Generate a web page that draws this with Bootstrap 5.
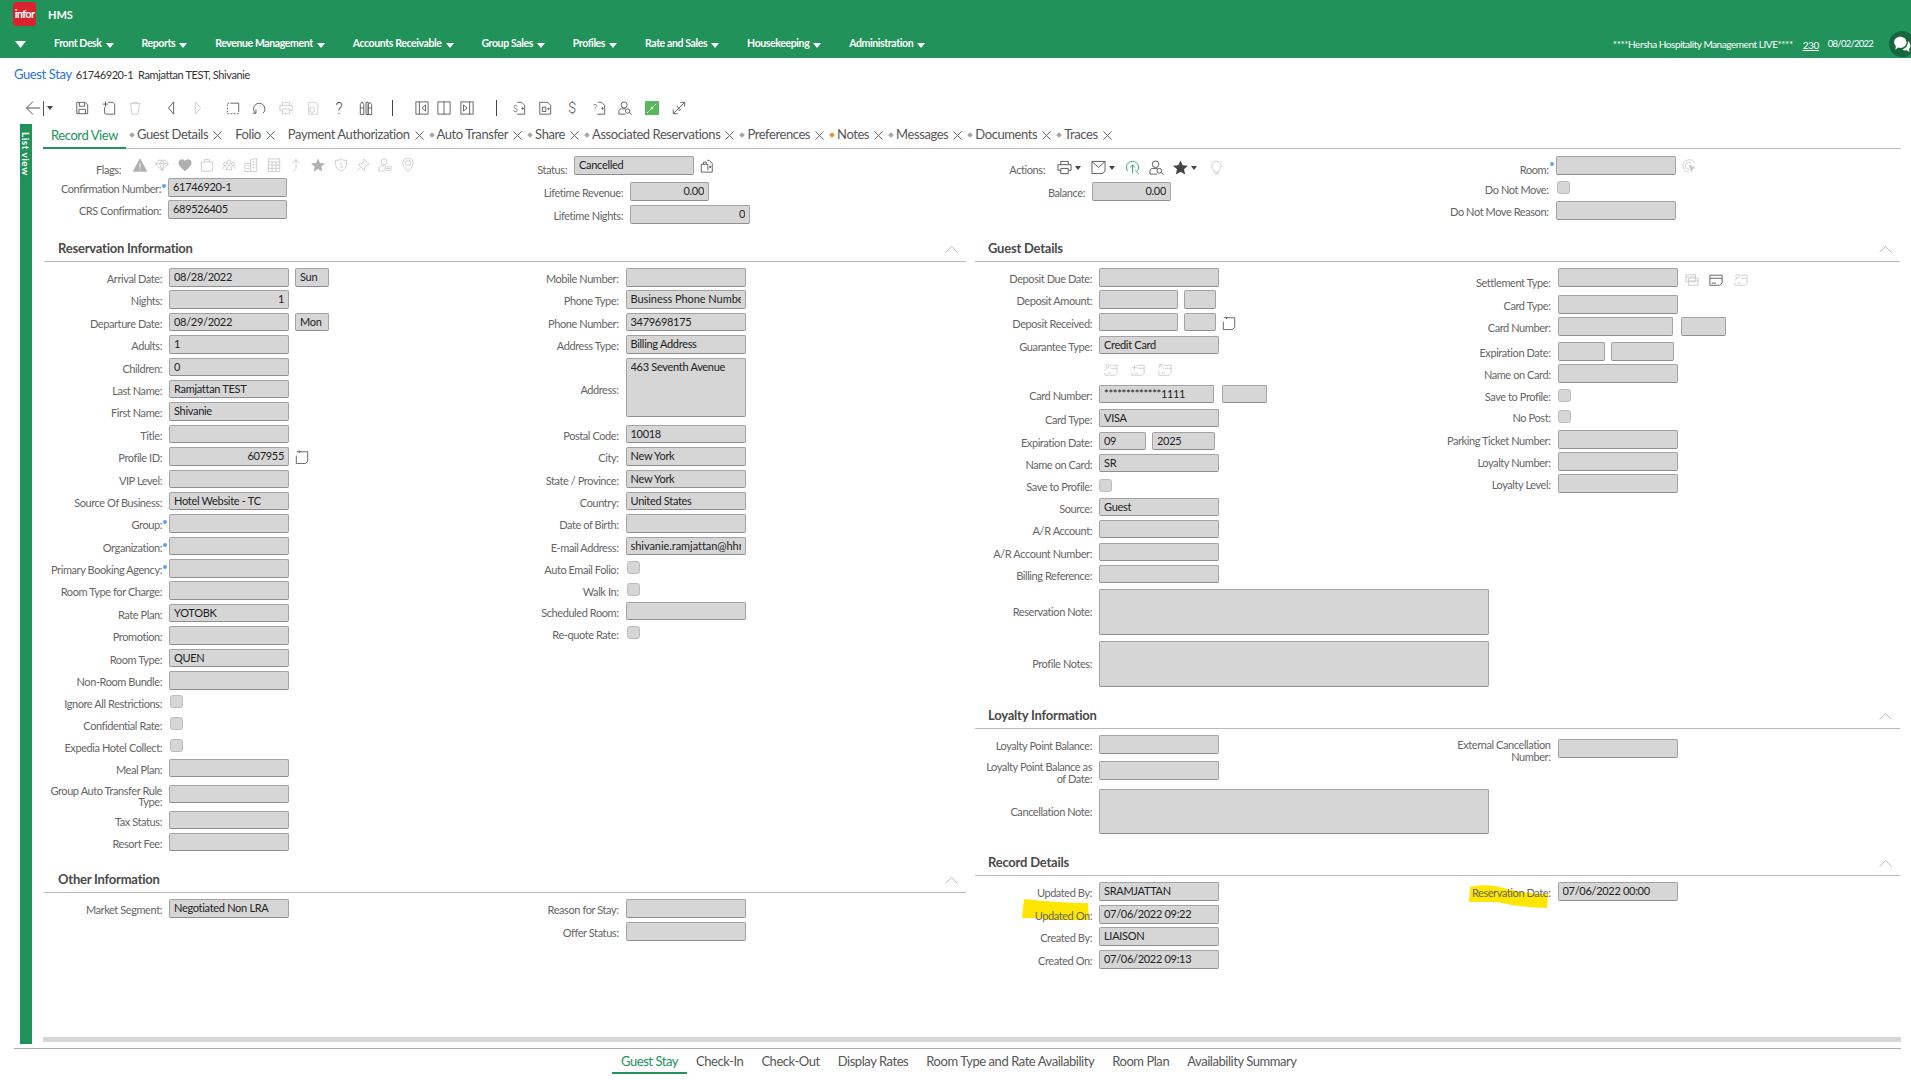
<!doctype html>
<html lang="en">
<head>
<meta charset="utf-8">
<title>HMS - Guest Stay</title>
<link href="https://cdn.jsdelivr.net/npm/bootstrap@5.3.0/dist/css/bootstrap.min.css" rel="stylesheet">
<style>
html,body{height:1080px;overflow:hidden;background:#fff}
body{font-family:"Lato","Liberation Sans",sans-serif;font-size:11px;color:#444;letter-spacing:-.35px}
svg.ic{fill:none;stroke:currentColor;stroke-width:1;flex:none;display:block;overflow:visible}
symbol text{fill:currentColor;stroke:none;font-family:"Roboto",sans-serif;font-weight:300}
.c-d{color:#555}.c-l{color:#c9c9c9}.c-g{color:#b0b0b0}
/* header */
.appbar{background:#20925a;height:58px;color:#fff;overflow:hidden;display:block}
.top-row{height:33px;padding-left:13px}
.logo-box{width:23px;height:24px;background:#d9232e;border-radius:3px;color:#fff;font-weight:700;font-size:11px;letter-spacing:-.7px;margin-top:-6px;display:flex;align-items:center;justify-content:center;line-height:1}
.hms{font-size:11px;font-weight:700;margin-left:12px;margin-top:-2px;letter-spacing:0}
.menu-row{height:25px;padding-left:15px;padding-bottom:3px}
.menu-tri{width:11px;height:7px;margin-right:28px}
.menu-i{font-size:10.5px;font-weight:700;color:#fff;margin-right:27.9px;white-space:nowrap;display:flex;align-items:center;gap:4px;letter-spacing:-.38px;padding:0}
.menu-i:hover{color:#fff}
.caret-w{width:0;height:0;border-left:4px solid transparent;border-right:4px solid transparent;border-top:5px solid #fff;margin-top:2px}
.sys{font-size:10px;color:#fff;margin-left:auto;white-space:nowrap;letter-spacing:-.44px;display:flex;align-items:center}
.sys-num{text-decoration:underline;margin:3px 9px 0 10px}
.sys-date{letter-spacing:-.75px;font-size:9.5px}
.chat{width:26px;height:26px;border-radius:50%;background:#17663f;margin-left:16px;margin-right:-4px;display:flex;align-items:center;justify-content:center}
/* crumb + toolbar */
.crumb{height:34px;padding-left:14px;color:#333;letter-spacing:-.4px}
.crumb a{color:#2a6fdb;font-size:13px;text-decoration:none;margin-right:4px;letter-spacing:-.38px}
.tbar{height:32px;padding-left:26px}
.ti{width:14px;height:16px}
.tg{display:flex;gap:12.6px}
.t-m22{margin-left:22px}.t-m21{margin-left:21px}.t-m19{margin-left:19px}.t-m15{margin-left:15px}
.tg-n{gap:8.5px}
.tg-w{gap:12.67px}
.sep{width:1px;height:16px;background:#444}
.bar-v{width:1px;height:15px;background:#555;margin-left:3px}
.caret-d{width:0;height:0;border-left:3px solid transparent;border-right:3px solid transparent;border-top:4px solid #444;margin-left:3px}
/* main */
.mainw{height:920px;padding-left:20px}
.listv{width:12px;height:920px;background:#20925a;color:#fff;flex:none;font-size:10px;font-weight:700;writing-mode:vertical-rl;padding-top:8px;line-height:12px;letter-spacing:.5px;white-space:nowrap}
.cont{width:1858px;margin-left:11px;height:920px}
.tabsw{height:25px;border-bottom:1px solid #b9b9b9;font-size:13px;flex-wrap:nowrap;letter-spacing:-.42px}
.tabsw .nav-link{padding:0 0 2px;color:#565656;display:flex;align-items:center;height:24px;white-space:nowrap;margin-right:6px}
.tabsw .nav-link.on{color:#20925a;border-bottom:2px solid #20925a;padding:0 8px;height:25px;margin-right:4px}
.tdot{width:4px;height:4px;background:#a6a6a6;transform:rotate(45deg);margin-right:3px;flex:none}
.tdot.ora{background:#f08a24}
.t-x{width:9px;height:9px;margin-left:5px;color:#666}
.ms-f{margin-left:7px}
/* summary */
.sumw{height:88px;padding-top:7px}
.s-a{width:436px}.s-b{width:508px}.s-c{width:437.5px}
.frow{display:flex;align-items:flex-start;height:22.4px}
.flab{flex:none;text-align:right;color:#666;padding-top:4px;line-height:14px;margin-right:7px;position:relative;font-size:11px;letter-spacing:-.42px}
.flab.two{padding-top:0;line-height:11.5px}
.flab.mid{padding-top:16px}
.lw-a{width:118px}.lw-b{width:139px}.lw-c{width:117px}.lw-d{width:150.5px}
.fbox{width:120px;height:18.5px;padding:0 4px;font-size:11px;line-height:15px;background:#d6d6d6;border:1px solid #a3a3a3;border-bottom-color:#8f8f8f;border-radius:2px;color:#222;white-space:nowrap;overflow:clip;overflow-clip-margin:content-box;flex:none;min-height:0;letter-spacing:-.3px}
.ls0{letter-spacing:-.05px}
.req::after{content:"";position:absolute;right:-5px;top:6px;width:4px;height:4px;border-radius:50%;background:#5aa5f0}
.w78{width:79px}.w32{width:32px;margin-left:6px}.w115{width:115px}.w45{width:45px;margin-left:8px}.w47{width:47px}.w63{width:63px;margin-left:6px}
.w33a{width:34px;margin-left:6px}
.w119{width:119px}.w79{width:79px}
.wide{width:390px}
.h46{height:46px}.h60{height:59px}.hc{height:45px}
.fchk{width:13px;height:13px;background-color:#d6d6d6;border:1px solid #bdbdbd;border-radius:2px;margin:2px 0 0 1px;opacity:1!important;flex:none;float:none}
.f3{margin-top:3px;margin-left:0}
.fi{width:14px;height:14px;color:#555;margin:3px 0 0 6px}
.fi.c-l{color:#c9c9c9}
/* section */
.panes{width:1858px}
.pane-l{width:923px;margin-right:9px;padding-left:1px}
.pane-r{width:925px}
.shead{height:25px;border-bottom:1px solid #b9b9b9;font-size:13px;font-weight:700;color:#4a4a4a;padding:0 8px 0 14px;display:flex;justify-content:space-between;align-items:center;letter-spacing:-.22px;margin:0}
.pane-r .shead{padding-left:13px}
.chev{width:13px;height:7px;color:#bbb}
.sbody{padding-top:6px}
.c1{width:436px}.c2{width:487px}.c3{width:425px}.c4{width:500px}
.r-19{height:27px}.r-21{height:21.8px}.r-21b{height:21px}.r-20{height:20.5px}.r-22{height:22px}.r-225{height:22.5px}.r-23{height:23px}.r-24{height:24px}.r-25{height:25px}.r-26{height:26px}.r-28{height:28px}.r-46{height:52px}.r-66{height:67.2px}
.sec-a{height:631px}.sec-g{height:467px}.sec-l{height:147px}
.iconrow{padding-left:129px;gap:12.8px;padding-top:4px;height:26.6px}
.addr .flab{padding-top:25px}
.hl{position:absolute;fill:#ffe600;stroke:none}
.hl-a{left:47px;top:-6px;width:67px;height:21px}
.hl-b{left:69px;top:3px;width:79px;height:23px}
.textup{position:relative}
.scrollb{height:5px;background:#d6d6d6;margin-top:auto;margin-bottom:2px}
/* bottom */
.btabs{margin-left:14px;width:1887px;border-top:1px solid #adadad;height:26px;padding-left:598px;font-size:13px;margin-top:4px;letter-spacing:-.45px}
.btabs .nav-link{padding:0 9px;color:#565656;height:25px;line-height:25px;white-space:nowrap}
.btabs .nav-link.on{color:#20925a;border-bottom:2px solid #20925a}
/* summary row details */
.flags-l{width:78px;padding-top:7px}
.flagset{gap:8.3px;margin-left:5px;margin-top:2px}
.flg{width:14px;height:14px}
.lw-st{width:88px}.st{height:26px}.st2{height:23px}
.st .flab,.st2 .flab{padding-top:7px}
.lr{height:23px}
.lw-lt{width:144px}
.lw-ac{width:58px}.lw-bal{width:98px}
.lw-rm{width:124px}
.ti2{width:15px;height:15px}
.acts{margin-top:4px;margin-left:5px}
.me-act{margin-right:10px}.me-act2{margin-right:10px}
.ms-a1{margin-left:9px}.ms-a2{margin-left:9px}.ms-a3{margin-left:12px}
.c-grn{color:#3aa76d}.c-st{color:#444}
.r-21e{height:22px}
.pt-set{padding-top:8px}
.set-ic{gap:10.5px;margin:4px 0 0 7px}
.ext{padding-top:4px}
.ext .flab{padding-left:45px}
</style>
</head>
<body>
<svg class="d-none">
<symbol id="i-save" viewBox="0 0 16 16"><path d="M2 1.5h9.5l3 3v10h-12.5z"/><path d="M5 1.5v4.5h6v-4.500M4.500 14.500v-5h7.500v5"/></symbol>
<symbol id="i-new" viewBox="0 0 16 16"><path d="M7 1.500h5.500l2 2v11.500h-10.500l-1-1v-7"/><path d="M4 .5v6M1 3.500h6"/></symbol>
<symbol id="i-trash" viewBox="0 0 16 16"><path d="M1.500 3h13M5.500 3v-1.500h5v1.500M3 3l1.500 12h7l1.500-12"/></symbol>
<symbol id="i-prev" viewBox="0 0 16 16"><path d="M11 1L5 8l6 7z"/></symbol>
<symbol id="i-next" viewBox="0 0 16 16"><path d="M5 1l6 7-6 7z"/></symbol>
<symbol id="i-copy" viewBox="0 0 16 16"><path d="M5 2.500h9.500v10"/><path d="M14.500 14.500h-13v-12h3.500" stroke-dasharray="2 1.600"/></symbol>
<symbol id="i-undo" viewBox="0 0 16 16"><path d="M4 14a6.500 6.500 0 1 1 8.500 0"/><path d="M4.500 9.500v4.500h-3.500"/></symbol>
<symbol id="i-print" viewBox="0 0 16 16"><path d="M4 5v-3.500h8v3.500M4 11h-3v-6h14v6h-3M4 9h8v5.500h-8z"/></symbol>
<symbol id="i-docc" viewBox="0 0 16 16"><path d="M3 1.500h8l2.500 2.500v11h-10.500z"/><circle cx="7" cy="10" r="3"/></symbol>
<symbol id="i-help" viewBox="0 0 16 16"><text x="8" y="15" font-size="18" text-anchor="middle">?</text></symbol>
<symbol id="i-cols" viewBox="0 0 16 16"><path d="M1.500 4l2-3 2 3v11.500h-4zM8 1.500h2.500v14h-2.500zM10.500 4l2-2.500 2 2.500v11.500h-4zM1.500 8h4M10.500 8h4"/></symbol>
<symbol id="i-pl" viewBox="0 0 16 16"><path d="M1 1h14v14h-14zM5 1v14M12 4.500l-4 3.500 4 3.500z"/></symbol>
<symbol id="i-pc" viewBox="0 0 16 16"><path d="M1 1h14v14h-14zM8 1v14"/></symbol>
<symbol id="i-pr" viewBox="0 0 16 16"><path d="M1 1h14v14h-14zM11 1v14M4 4.500l4 3.500-4 3.500z"/></symbol>
<symbol id="i-dola" viewBox="0 0 16 16"><path d="M6 1.500h5l3.500 3.500v10h-8.500"/><circle cx="12.200" cy="8.500" r=".8" fill="currentColor"/><text x="1" y="12" font-size="10">$</text></symbol>
<symbol id="i-docb" viewBox="0 0 16 16"><path d="M2 1.500h9l3.500 3.500v10h-12.500z"/><path d="M5 7h4v5h-4z"/><circle cx="12" cy="9" r=".8" fill="currentColor"/></symbol>
<symbol id="i-dollar" viewBox="0 0 16 16"><text x="8" y="14" font-size="17" text-anchor="middle">$</text></symbol>
<symbol id="i-helpd" viewBox="0 0 16 16"><path d="M7 1.500h4l3.500 3.500v10h-8.500"/><circle cx="12" cy="8.500" r=".8" fill="currentColor"/><text x="1" y="11" font-size="10">?</text></symbol>
<symbol id="i-pers" viewBox="0 0 16 16"><circle cx="7" cy="4.500" r="3.500"/><path d="M1 15v-3c0-2 1.500-3 3-3h5"/><path d="M1 15h7.500"/><circle cx="11" cy="11.500" r="2.500"/><path d="M13 13.500l2.500 2"/></symbol>
<symbol id="i-expand" viewBox="0 0 16 16"><path d="M1.500 14.500L14.500 1.500M9.500 1.500h5v5M1.500 9.500v5h5M5 5.500l5 5M9 11.500l-1.500-1.500"/></symbol>
<symbol id="i-tri" viewBox="0 0 16 16"><path d="M8 1L15.500 15H.5z" fill="currentColor"/><path d="M8 6v5M8 12.200v1.300" stroke="#fff"/></symbol>
<symbol id="i-dia" viewBox="0 0 16 16"><path d="M4 2.500h8l3.500 4-7.500 8-7.500-8zM.5 6.500h15M5.500 6.500l2.500 8 2.500-8-2.500-4z"/></symbol>
<symbol id="i-heart" viewBox="0 0 16 16"><path d="M8 15C3 11 .5 8.500.5 5.500 .5 3 2.500 1.500 4.500 1.500 6 1.500 7.300 2.300 8 3.500 8.700 2.300 10 1.500 11.500 1.500 13.500 1.500 15.500 3 15.500 5.500 15.500 8.500 13 11 8 15z" fill="currentColor" stroke="none"/></symbol>
<symbol id="i-bag" viewBox="0 0 16 16"><path d="M1.500 4.500h13v10.500h-13zM5.500 4.500v-3h5v3"/></symbol>
<symbol id="i-group" viewBox="0 0 16 16"><circle cx="8" cy="4.500" r="2.300"/><circle cx="3.500" cy="7" r="1.800"/><circle cx="12.500" cy="7" r="1.800"/><path d="M5 13.500c0-3 1-5 3-5s3 2 3 5zM1 12.500c0-1.500.8-3 2.500-3M15 12.500c0-1.500-.8-3-2.500-3"/></symbol>
<symbol id="i-book" viewBox="0 0 16 16"><path d="M1 6h6.500v9.500h-6.500zM7.500 15.500V2l7-1.500v15zM3 9h3M3 12h3M9.500 4.500h3M9.500 7.500h3M9.500 10.500h3"/></symbol>
<symbol id="i-table" viewBox="0 0 16 16"><path d="M1.500 1h13v14.500h-13zM1.500 4.500h13M1.500 8h13M1.500 11.800h13M5.800 4.500v11M10.200 4.500v11"/></symbol>
<symbol id="i-up" viewBox="0 0 16 16"><path d="M8 1.500v10c0 2-1 3-3 3.500M4.500 6l3.500-4.500 3.500 4.500"/></symbol>
<symbol id="i-star" viewBox="0 0 16 16"><path d="M8 .5l2.300 5.200 5.700.5-4.300 3.700 1.300 5.600-5-3-5 3 1.300-5.600L0 6.200l5.700-.5z" fill="currentColor" stroke="none"/></symbol>
<symbol id="i-shield" viewBox="0 0 16 16"><path d="M8 .8c2 1.500 4 2 6.500 2 0 6-1 9.500-6.500 12.500-5.500-3-6.500-6.500-6.500-12.500 2.500 0 4.500-.5 6.500-2z"/><text x="8" y="11" font-size="8" text-anchor="middle">$</text></symbol>
<symbol id="i-pin" viewBox="0 0 16 16"><path d="M9 1l6 6-2 .5-3 3.500-.5 3-7-6.500 3-.5 3.500-3zM5 10.500l-3.500 4"/></symbol>
<symbol id="i-perc" viewBox="0 0 16 16"><circle cx="7" cy="4.300" r="3.300"/><path d="M1 15v-2.500c0-2 1.500-3.500 3.500-3.500h4M1 15h7"/><path d="M9.500 10h5a1.500 1.500 0 0 1 0 4h-5a1.500 1.500 0 0 1 0-4zM9 12h6"/></symbol>
<symbol id="i-loc" viewBox="0 0 16 16"><path d="M8 15.500C4.500 11 2 8.500 2 6a6 6 0 0 1 12 0c0 2.500-2.500 5-6 9.500z"/><circle cx="8" cy="6" r="3"/></symbol>
<symbol id="i-newd" viewBox="0 0 16 16"><path d="M5 2h9.500v11l-2.500 2.500h-10.500v-9"/><path d="M2 2h4M4.500.5l1.500 1.500-1.500 1.500"/></symbol>
<symbol id="i-brief" viewBox="0 0 16 16"><path d="M8 1.500h2.500l3.500 3.500v10h-12.500v-9h7.500v7"/><path d="M4 6v-2.500h3v2.500"/><circle cx="11.700" cy="9" r=".8" fill="currentColor"/></symbol>
<symbol id="i-mail" viewBox="0 0 16 16"><path d="M1 1.500h14v10.500l-3 2.500h-11zM1 1.500l7 6.500 7-6.500"/></symbol>
<symbol id="i-search" viewBox="0 0 16 16"><path d="M3 12a6.500 6.500 0 1 1 10 0M8 14.500v-9M5.500 8l2.500-3 2.500 3M11 11l3.500 4"/></symbol>
<symbol id="i-bulb" viewBox="0 0 16 16"><path d="M5.500 11C4 10 3 8.500 3 6.500a5 5 0 0 1 10 0c0 2-1 3.500-2.500 4.500v2h-5zM6 15h4M2 1l1 1M14 1l-1 1"/></symbol>
<symbol id="i-target" viewBox="0 0 16 16"><path d="M14.500 5A7 7 0 1 0 8 15M11 5.500A4 4 0 1 0 8 12"/><path d="M8 7l7 3-3 1-1 3.500z" fill="currentColor"/></symbol>
<symbol id="i-cards" viewBox="0 0 16 16"><path d="M1 2h11v8h-11zM4 6h11v8h-11zM1 4.500h11M4 9h11"/></symbol>
<symbol id="i-card" viewBox="0 0 16 16"><path d="M1 2.500h14v9l-3 2.500h-11zM1 6h14M3 11.500h5"/></symbol>
<symbol id="i-cardu" viewBox="0 0 16 16"><circle cx="4" cy="3.500" r="2"/><path d="M1 9c0-1.500 1-2.500 3-2.500M7 2.500h8v9l-2.500 2.500h-11.500v-3M8 6h7M4 11.500h4"/></symbol>
<symbol id="i-cardp" viewBox="0 0 16 16"><path d="M1 5h6M4 2v6M6 2.500h9v9l-2.500 2.500h-11.500v-3M8 6h7M4 11.500h4"/></symbol>
<symbol id="i-carde" viewBox="0 0 16 16"><path d="M1.500 1.500l5 5M1.500 1.500v4M1.500 1.500h4M6 2.500h9v9l-2.500 2.500h-11.500v-6M8 6h7M4 11.500h4"/></symbol>
<symbol id="i-chat" viewBox="0 0 16 16"><path d="M1 6.500C1 3.500 3.500 1.500 6.500 1.500s5.500 2 5.500 5-2.500 5-5.500 5c-.7 0-1.300-.1-1.900-.3L2 13l.6-3C1.600 9 1 7.800 1 6.500z" fill="#fff" stroke="none"/><path d="M13.200 5.500c1.300.9 2.300 2.300 2.300 4 0 1.200-.5 2.200-1.300 3l.5 2.500-2.600-1.400c-1.300.3-2.900 0-3.900-.8 2.700-.4 5-3 5-6.300z" fill="#fff" stroke="none"/></symbol>
</svg>

<nav class="navbar appbar p-0">
  <div class="d-flex align-items-center top-row">
    <span class="logo-box">infor</span>
    <span class="hms">HMS</span>
  </div>
  <div class="d-flex align-items-center menu-row">
    <svg class="menu-tri" viewBox="0 0 11 7"><path d="M0 0h11L5.500 7z" fill="#fff"/></svg>
    <a class="menu-i nav-link" href="#">Front Desk<i class="caret-w"></i></a>
    <a class="menu-i nav-link" href="#">Reports<i class="caret-w"></i></a>
    <a class="menu-i nav-link" href="#">Revenue Management<i class="caret-w"></i></a>
    <a class="menu-i nav-link" href="#">Accounts Receivable<i class="caret-w"></i></a>
    <a class="menu-i nav-link" href="#">Group Sales<i class="caret-w"></i></a>
    <a class="menu-i nav-link" href="#">Profiles<i class="caret-w"></i></a>
    <a class="menu-i nav-link" href="#">Rate and Sales<i class="caret-w"></i></a>
    <a class="menu-i nav-link" href="#">Housekeeping<i class="caret-w"></i></a>
    <a class="menu-i nav-link" href="#">Administration<i class="caret-w"></i></a>
    <div class="sys">
      <span>****Hersha Hospitality Management LIVE****</span>
      <span class="sys-num">230</span>
      <span class="sys-date">08/02/2022</span>
      <span class="chat"><svg class="ic" width="18" height="18"><use href="#i-chat"/></svg></span>
    </div>
  </div>
</nav>

<div class="crumb d-flex align-items-center"><a href="#">Guest Stay</a><span>61746920-1 &nbsp;Ramjattan TEST, Shivanie</span></div>

<div class="tbar d-flex align-items-center c-d">
  <svg class="ic" width="14" height="14" viewBox="0 0 14 14"><path d="M14 7H.5M7 .5L.5 7 7 13.500"/></svg>
  <span class="bar-v"></span><span class="caret-d"></span>
  <div class="tg t-m22"><svg class="ic ti"><use href="#i-save"/></svg><svg class="ic ti"><use href="#i-new"/></svg><svg class="ic ti c-l"><use href="#i-trash"/></svg></div>
  <div class="tg t-m22"><svg class="ic ti"><use href="#i-prev"/></svg><svg class="ic ti c-l"><use href="#i-next"/></svg></div>
  <div class="tg t-m21"><svg class="ic ti"><use href="#i-copy"/></svg><svg class="ic ti"><use href="#i-undo"/></svg><svg class="ic ti c-l"><use href="#i-print"/></svg><svg class="ic ti c-l"><use href="#i-docc"/></svg><svg class="ic ti"><use href="#i-help"/></svg><svg class="ic ti"><use href="#i-cols"/></svg></div>
  <span class="sep t-m19"></span>
  <div class="tg tg-n t-m22"><svg class="ic ti"><use href="#i-pl"/></svg><svg class="ic ti"><use href="#i-pc"/></svg><svg class="ic ti"><use href="#i-pr"/></svg></div>
  <span class="sep t-m22"></span>
  <div class="tg tg-w t-m15"><svg class="ic ti"><use href="#i-dola"/></svg><svg class="ic ti"><use href="#i-docb"/></svg><svg class="ic ti"><use href="#i-dollar"/></svg><svg class="ic ti"><use href="#i-helpd"/></svg><svg class="ic ti"><use href="#i-pers"/></svg>
    <svg class="ti" viewBox="0 0 14 14"><rect width="14" height="14" fill="#5cb85c"/><path d="M2 12L12 2" stroke="#fff" stroke-dasharray="2 1.500"/><circle cx="7" cy="7" r="1.200" fill="#fff"/></svg>
    <svg class="ic ti"><use href="#i-expand"/></svg></div>
</div>

<div class="mainw d-flex">
  <div class="listv">List view</div>
  <div class="cont d-flex flex-column">
    <ul class="nav tabsw">
      <li class="nav-item"><a class="nav-link on" href="#">Record View</a></li>
      <li class="nav-item"><a class="nav-link" href="#"><i class="tdot"></i>Guest Details<svg class="ic t-x" viewBox="0 0 9 9"><path d="M.5.5l8 8M8.500.5l-8 8"/></svg></a></li>
      <li class="nav-item"><a class="nav-link ms-f" href="#">Folio<svg class="ic t-x" viewBox="0 0 9 9"><path d="M.5.5l8 8M8.500.5l-8 8"/></svg></a></li>
      <li class="nav-item"><a class="nav-link ms-f" href="#">Payment Authorization<svg class="ic t-x" viewBox="0 0 9 9"><path d="M.5.5l8 8M8.500.5l-8 8"/></svg></a></li>
      <li class="nav-item"><a class="nav-link" href="#"><i class="tdot"></i>Auto Transfer<svg class="ic t-x" viewBox="0 0 9 9"><path d="M.5.5l8 8M8.500.5l-8 8"/></svg></a></li>
      <li class="nav-item"><a class="nav-link" href="#"><i class="tdot"></i>Share<svg class="ic t-x" viewBox="0 0 9 9"><path d="M.5.5l8 8M8.500.5l-8 8"/></svg></a></li>
      <li class="nav-item"><a class="nav-link" href="#"><i class="tdot"></i>Associated Reservations<svg class="ic t-x" viewBox="0 0 9 9"><path d="M.5.5l8 8M8.500.5l-8 8"/></svg></a></li>
      <li class="nav-item"><a class="nav-link" href="#"><i class="tdot"></i>Preferences<svg class="ic t-x" viewBox="0 0 9 9"><path d="M.5.5l8 8M8.500.5l-8 8"/></svg></a></li>
      <li class="nav-item"><a class="nav-link" href="#"><i class="tdot ora"></i>Notes<svg class="ic t-x" viewBox="0 0 9 9"><path d="M.5.5l8 8M8.500.5l-8 8"/></svg></a></li>
      <li class="nav-item"><a class="nav-link" href="#"><i class="tdot"></i>Messages<svg class="ic t-x" viewBox="0 0 9 9"><path d="M.5.5l8 8M8.500.5l-8 8"/></svg></a></li>
      <li class="nav-item"><a class="nav-link" href="#"><i class="tdot"></i>Documents<svg class="ic t-x" viewBox="0 0 9 9"><path d="M.5.5l8 8M8.500.5l-8 8"/></svg></a></li>
      <li class="nav-item"><a class="nav-link" href="#"><i class="tdot"></i>Traces<svg class="ic t-x" viewBox="0 0 9 9"><path d="M.5.5l8 8M8.500.5l-8 8"/></svg></a></li>
    </ul>

    <!-- summary -->
    <div class="sumw d-flex">
      <div class="s-a">
        <div class="frow r-22">
          <div class="flab flags-l">Flags:</div>
          <div class="d-flex flagset">
            <svg class="ic flg c-g"><use href="#i-tri"/></svg><svg class="ic flg c-l"><use href="#i-dia"/></svg><svg class="ic flg c-g"><use href="#i-heart"/></svg><svg class="ic flg c-l"><use href="#i-bag"/></svg><svg class="ic flg c-l"><use href="#i-group"/></svg><svg class="ic flg c-l"><use href="#i-book"/></svg><svg class="ic flg c-l"><use href="#i-table"/></svg><svg class="ic flg c-l"><use href="#i-up"/></svg><svg class="ic flg c-g"><use href="#i-star"/></svg><svg class="ic flg c-l"><use href="#i-shield"/></svg><svg class="ic flg c-l"><use href="#i-pin"/></svg><svg class="ic flg c-l"><use href="#i-perc"/></svg><svg class="ic flg c-l"><use href="#i-loc"/></svg>
          </div>
        </div>
        <div class="frow"><div class="flab lw-a req">Confirmation Number:</div><div class="form-control fbox w119">61746920-1</div></div>
        <div class="frow"><div class="flab lw-a">CRS Confirmation:</div><div class="form-control fbox w119">689526405</div></div>
      </div>
      <div class="s-b">
        <div class="frow st"><div class="flab lw-st">Status:</div><div class="form-control fbox">Cancelled</div><svg class="ic fi"><use href="#i-brief"/></svg></div>
        <div class="frow lr"><div class="flab lw-lt">Lifetime Revenue:</div><div class="form-control fbox w79 text-end">0.00</div></div>
        <div class="frow"><div class="flab lw-lt">Lifetime Nights:</div><div class="form-control fbox text-end">0</div></div>
      </div>
      <div class="s-c">
        <div class="frow st"><div class="flab lw-ac">Actions:</div>
          <div class="d-flex align-items-center acts">
            <svg class="ic ti2 c-d"><use href="#i-print"/></svg><span class="caret-d me-act"></span>
            <svg class="ic ti2 c-d"><use href="#i-mail"/></svg><span class="caret-d me-act2"></span>
            <svg class="ic ti2 c-grn"><use href="#i-search"/></svg>
            <svg class="ic ti2 c-d ms-a1"><use href="#i-pers"/></svg>
            <svg class="ic ti2 c-st ms-a2"><use href="#i-star"/></svg><span class="caret-d"></span>
            <svg class="ic ti2 c-l ms-a3"><use href="#i-bulb"/></svg>
          </div>
        </div>
        <div class="frow lr"><div class="flab lw-bal">Balance:</div><div class="form-control fbox w79 text-end">0.00</div></div>
      </div>
      <div>
        <div class="frow st2"><div class="flab lw-rm req">Room:</div><div class="form-control fbox"></div><svg class="ic fi c-l"><use href="#i-target"/></svg></div>
        <div class="frow r-21e"><div class="flab lw-rm">Do Not Move:</div><input class="form-check-input fchk" type="checkbox" disabled aria-label="Do Not Move"></div>
        <div class="frow"><div class="flab lw-rm">Do Not Move Reason:</div><div class="form-control fbox"></div></div>
      </div>
    </div>

    <div class="panes d-flex">
      <!-- left pane -->
      <div class="pane-l">
        <section class="sec-a">
          <h2 class="shead">Reservation Information<svg class="ic chev" viewBox="0 0 13 7"><path d="M.5 6.500L6.500.5l6 6"/></svg></h2>
          <div class="sbody d-flex">
            <div class="c1">
              <div class="frow"><div class="flab lw-a">Arrival Date:</div><div class="form-control fbox">08/28/2022</div><div class="form-control fbox w33a">Sun</div></div>
              <div class="frow"><div class="flab lw-a">Nights:</div><div class="form-control fbox text-end">1</div></div>
              <div class="frow"><div class="flab lw-a">Departure Date:</div><div class="form-control fbox">08/29/2022</div><div class="form-control fbox w33a">Mon</div></div>
              <div class="frow"><div class="flab lw-a">Adults:</div><div class="form-control fbox">1</div></div>
              <div class="frow"><div class="flab lw-a">Children:</div><div class="form-control fbox">0</div></div>
              <div class="frow"><div class="flab lw-a">Last Name:</div><div class="form-control fbox">Ramjattan TEST</div></div>
              <div class="frow"><div class="flab lw-a">First Name:</div><div class="form-control fbox">Shivanie</div></div>
              <div class="frow"><div class="flab lw-a">Title:</div><div class="form-control fbox"></div></div>
              <div class="frow"><div class="flab lw-a">Profile ID:</div><div class="form-control fbox text-end">607955</div><svg class="ic fi"><use href="#i-newd"/></svg></div>
              <div class="frow"><div class="flab lw-a">VIP Level:</div><div class="form-control fbox"></div></div>
              <div class="frow"><div class="flab lw-a">Source Of Business:</div><div class="form-control fbox">Hotel Website - TC</div></div>
              <div class="frow"><div class="flab lw-a req">Group:</div><div class="form-control fbox"></div></div>
              <div class="frow"><div class="flab lw-a req">Organization:</div><div class="form-control fbox"></div></div>
              <div class="frow"><div class="flab lw-a req">Primary Booking Agency:</div><div class="form-control fbox"></div></div>
              <div class="frow"><div class="flab lw-a">Room Type for Charge:</div><div class="form-control fbox"></div></div>
              <div class="frow"><div class="flab lw-a">Rate Plan:</div><div class="form-control fbox">YOTOBK</div></div>
              <div class="frow"><div class="flab lw-a">Promotion:</div><div class="form-control fbox"></div></div>
              <div class="frow"><div class="flab lw-a">Room Type:</div><div class="form-control fbox">QUEN</div></div>
              <div class="frow"><div class="flab lw-a">Non-Room Bundle:</div><div class="form-control fbox"></div></div>
              <div class="frow r-21"><div class="flab lw-a">Ignore All Restrictions:</div><input class="form-check-input fchk" type="checkbox" disabled aria-label="Ignore All Restrictions"></div>
              <div class="frow r-21"><div class="flab lw-a">Confidential Rate:</div><input class="form-check-input fchk" type="checkbox" disabled aria-label="Confidential Rate"></div>
              <div class="frow r-21"><div class="flab lw-a">Expedia Hotel Collect:</div><input class="form-check-input fchk" type="checkbox" disabled aria-label="Expedia Hotel Collect"></div>
              <div class="frow r-26"><div class="flab lw-a">Meal Plan:</div><div class="form-control fbox"></div></div>
              <div class="frow r-26"><div class="flab lw-a two">Group Auto Transfer Rule Type:</div><div class="form-control fbox"></div></div>
              <div class="frow r-22"><div class="flab lw-a">Tax Status:</div><div class="form-control fbox"></div></div>
              <div class="frow r-22"><div class="flab lw-a">Resort Fee:</div><div class="form-control fbox"></div></div>
            </div>
            <div class="c2">
              <div class="frow"><div class="flab lw-b">Mobile Number:</div><div class="form-control fbox"></div></div>
              <div class="frow"><div class="flab lw-b">Phone Type:</div><div class="form-control fbox ls0">Business Phone Number</div></div>
              <div class="frow"><div class="flab lw-b">Phone Number:</div><div class="form-control fbox">3479698175</div></div>
              <div class="frow"><div class="flab lw-b">Address Type:</div><div class="form-control fbox">Billing Address</div></div>
              <div class="frow r-66 addr"><div class="flab lw-b">Address:</div><div class="form-control fbox h60">463 Seventh Avenue</div></div>
              <div class="frow"><div class="flab lw-b">Postal Code:</div><div class="form-control fbox">10018</div></div>
              <div class="frow"><div class="flab lw-b">City:</div><div class="form-control fbox">New York</div></div>
              <div class="frow"><div class="flab lw-b">State / Province:</div><div class="form-control fbox">New York</div></div>
              <div class="frow"><div class="flab lw-b">Country:</div><div class="form-control fbox">United States</div></div>
              <div class="frow"><div class="flab lw-b">Date of Birth:</div><div class="form-control fbox"></div></div>
              <div class="frow"><div class="flab lw-b">E-mail Address:</div><div class="form-control fbox ls0">shivanie.ramjattan@hhrinc.com</div></div>
              <div class="frow r-22"><div class="flab lw-b">Auto Email Folio:</div><input class="form-check-input fchk" type="checkbox" disabled aria-label="Auto Email Folio"></div>
              <div class="frow r-20"><div class="flab lw-b">Walk In:</div><input class="form-check-input fchk" type="checkbox" disabled aria-label="Walk In"></div>
              <div class="frow r-225"><div class="flab lw-b">Scheduled Room:</div><div class="form-control fbox"></div></div>
              <div class="frow"><div class="flab lw-b">Re-quote Rate:</div><input class="form-check-input fchk" type="checkbox" disabled aria-label="Re-quote Rate"></div>
            </div>
          </div>
        </section>
        <section>
          <h2 class="shead">Other Information<svg class="ic chev" viewBox="0 0 13 7"><path d="M.5 6.500L6.500.5l6 6"/></svg></h2>
          <div class="sbody d-flex">
            <div class="c1"><div class="frow"><div class="flab lw-a">Market Segment:</div><div class="form-control fbox">Negotiated Non LRA</div></div></div>
            <div class="c2">
              <div class="frow r-23"><div class="flab lw-b">Reason for Stay:</div><div class="form-control fbox"></div></div>
              <div class="frow"><div class="flab lw-b">Offer Status:</div><div class="form-control fbox"></div></div>
            </div>
          </div>
        </section>
      </div>

      <!-- right pane -->
      <div class="pane-r">
        <section class="sec-g">
          <h2 class="shead">Guest Details<svg class="ic chev" viewBox="0 0 13 7"><path d="M.5 6.500L6.500.5l6 6"/></svg></h2>
          <div class="sbody d-flex">
            <div class="c3">
              <div class="frow"><div class="flab lw-c">Deposit Due Date:</div><div class="form-control fbox"></div></div>
              <div class="frow"><div class="flab lw-c">Deposit Amount:</div><div class="form-control fbox w78"></div><div class="form-control fbox w32"></div></div>
              <div class="frow r-23"><div class="flab lw-c">Deposit Received:</div><div class="form-control fbox w78"></div><div class="form-control fbox w32"></div><svg class="ic fi"><use href="#i-newd"/></svg></div>
              <div class="frow"><div class="flab lw-c">Guarantee Type:</div><div class="form-control fbox">Credit Card</div></div>
              <div class="d-flex iconrow c-l"><svg class="ic ti"><use href="#i-cardu"/></svg><svg class="ic ti"><use href="#i-cardp"/></svg><svg class="ic ti"><use href="#i-carde"/></svg></div>
              <div class="frow r-24"><div class="flab lw-c">Card Number:</div><div class="form-control fbox w115">*************1111</div><div class="form-control fbox w45"></div></div>
              <div class="frow r-23"><div class="flab lw-c">Card Type:</div><div class="form-control fbox">VISA</div></div>
              <div class="frow r-22"><div class="flab lw-c">Expiration Date:</div><div class="form-control fbox w47">09</div><div class="form-control fbox w63">2025</div></div>
              <div class="frow r-22"><div class="flab lw-c">Name on Card:</div><div class="form-control fbox">SR</div></div>
              <div class="frow r-22"><div class="flab lw-c">Save to Profile:</div><input class="form-check-input fchk f3" type="checkbox" disabled aria-label="Save to Profile"></div>
              <div class="frow r-22"><div class="flab lw-c">Source:</div><div class="form-control fbox">Guest</div></div>
              <div class="frow r-23"><div class="flab lw-c">A/R Account:</div><div class="form-control fbox"></div></div>
              <div class="frow r-22"><div class="flab lw-c">A/R Account Number:</div><div class="form-control fbox"></div></div>
              <div class="frow r-24"><div class="flab lw-c">Billing Reference:</div><div class="form-control fbox"></div></div>
            </div>
            <div class="c4">
              <div class="frow r-19"><div class="flab lw-d pt-set">Settlement Type:</div><div class="form-control fbox"></div>
                <div class="d-flex set-ic"><svg class="ic ti c-l"><use href="#i-cards"/></svg><svg class="ic ti c-d"><use href="#i-card"/></svg><svg class="ic ti c-l"><use href="#i-cardu"/></svg></div></div>
              <div class="frow r-22"><div class="flab lw-d">Card Type:</div><div class="form-control fbox"></div></div>
              <div class="frow r-25"><div class="flab lw-d">Card Number:</div><div class="form-control fbox w115"></div><div class="form-control fbox w45"></div></div>
              <div class="frow r-22"><div class="flab lw-d">Expiration Date:</div><div class="form-control fbox w47"></div><div class="form-control fbox w63"></div></div>
              <div class="frow r-22"><div class="flab lw-d">Name on Card:</div><div class="form-control fbox"></div></div>
              <div class="frow r-21b"><div class="flab lw-d">Save to Profile:</div><input class="form-check-input fchk f3" type="checkbox" disabled aria-label="Save to Profile"></div>
              <div class="frow r-23"><div class="flab lw-d">No Post:</div><input class="form-check-input fchk f3" type="checkbox" disabled aria-label="No Post"></div>
              <div class="frow r-22"><div class="flab lw-d">Parking Ticket Number:</div><div class="form-control fbox"></div></div>
              <div class="frow r-22"><div class="flab lw-d">Loyalty Number:</div><div class="form-control fbox"></div></div>
              <div class="frow r-22"><div class="flab lw-d">Loyalty Level:</div><div class="form-control fbox"></div></div>
            </div>
          </div>
          <div class="frow r-46"><div class="flab lw-c mid">Reservation Note:</div><div class="form-control fbox wide h46"></div></div>
          <div class="frow"><div class="flab lw-c mid">Profile Notes:</div><div class="form-control fbox wide h46"></div></div>
        </section>
        <section class="sec-l">
          <h2 class="shead">Loyalty Information<svg class="ic chev" viewBox="0 0 13 7"><path d="M.5 6.500L6.500.5l6 6"/></svg></h2>
          <div class="sbody d-flex">
            <div class="c3">
              <div class="frow r-26"><div class="flab lw-c">Loyalty Point Balance:</div><div class="form-control fbox"></div></div>
              <div class="frow r-28"><div class="flab lw-c two">Loyalty Point Balance as of Date:</div><div class="form-control fbox"></div></div>
            </div>
            <div class="c4 ext"><div class="frow"><div class="flab lw-d two">External Cancellation Number:</div><div class="form-control fbox"></div></div></div>
          </div>
          <div class="frow"><div class="flab lw-c mid">Cancellation Note:</div><div class="form-control fbox wide hc"></div></div>
        </section>
        <section>
          <h2 class="shead">Record Details<svg class="ic chev" viewBox="0 0 13 7"><path d="M.5 6.500L6.500.5l6 6"/></svg></h2>
          <div class="sbody d-flex">
            <div class="c3">
              <div class="frow r-23"><div class="flab lw-c">Updated By:</div><div class="form-control fbox">SRAMJATTAN</div></div>
              <div class="frow r-22"><div class="flab lw-c"><svg class="hl hl-a" viewBox="0 0 67 21"><path d="M2 0C20 2 45 4 66 4L67 21H28L16 19H0z"/></svg><span class="textup">Updated On:</span></div><div class="form-control fbox">07/06/2022 09:22</div></div>
              <div class="frow r-23"><div class="flab lw-c">Created By:</div><div class="form-control fbox">LIAISON</div></div>
              <div class="frow"><div class="flab lw-c">Created On:</div><div class="form-control fbox">07/06/2022 09:13</div></div>
            </div>
            <div class="c4">
              <div class="frow"><div class="flab lw-d"><svg class="hl hl-b" viewBox="0 0 79 23"><path d="M1 2C12-1 26 0 38 4 50 7 65 9 79 9L78 23C60 23 42 20 28 17H0z"/></svg><span class="textup">Reservation Date:</span></div><div class="form-control fbox">07/06/2022 00:00</div></div>
            </div>
          </div>
        </section>
      </div>
    </div>
    <div class="scrollb"></div>
  </div>
</div>

<ul class="nav btabs">
  <li class="nav-item"><a class="nav-link on" href="#">Guest Stay</a></li>
  <li class="nav-item"><a class="nav-link" href="#">Check-In</a></li>
  <li class="nav-item"><a class="nav-link" href="#">Check-Out</a></li>
  <li class="nav-item"><a class="nav-link" href="#">Display Rates</a></li>
  <li class="nav-item"><a class="nav-link" href="#">Room Type and Rate Availability</a></li>
  <li class="nav-item"><a class="nav-link" href="#">Room Plan</a></li>
  <li class="nav-item"><a class="nav-link" href="#">Availability Summary</a></li>
</ul>
</body>
</html>
